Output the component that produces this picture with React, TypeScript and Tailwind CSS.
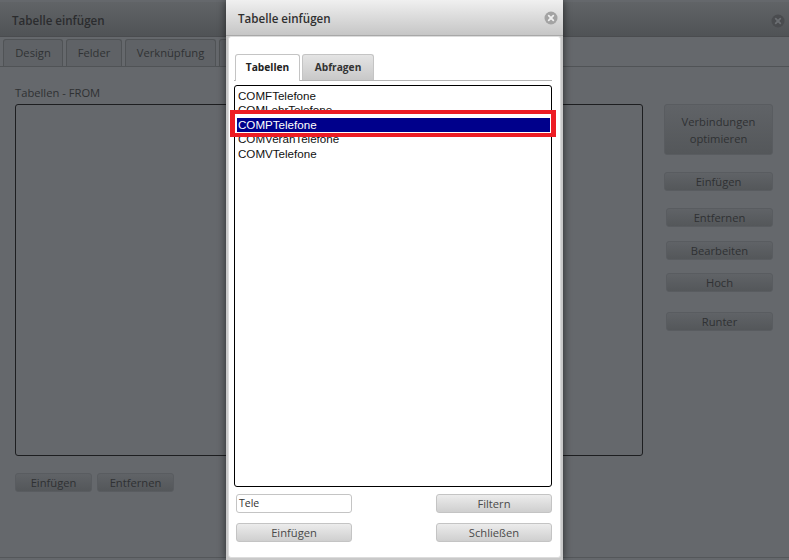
const segoe = "font-['Open_Sans','Noto_Sans',sans-serif]";

function DimButton({ label, className }: { label: string; className: string }) {
  return (
    <div
      className={`flex items-center justify-center rounded-[3px] border border-[#595c60] bg-gradient-to-b from-[#606367] to-[#54575a] pt-[1px] text-[11.2px] text-[#2f3133] ${className}`}
    >
      {label}
    </div>
  );
}

function LightButton({ label }: { label: string }) {
  return (
    <div className="flex h-[19px] w-[116px] items-center justify-center rounded-[3px] border border-[#c4c4c4] bg-gradient-to-b from-[#ececec] to-[#cfcfcf] pt-[1px] text-[11.2px] text-[#4a4a4a]">
      {label}
    </div>
  );
}

function CloseIcon({ fill, stroke }: { fill: string; stroke: string }) {
  return (
    <svg width="14" height="14" viewBox="0 0 14 14">
      <circle cx="7" cy="7" r="6.5" fill={fill} />
      <path d="M4.7 4.7l4.6 4.6M9.3 4.7l-4.6 4.6" stroke={stroke} strokeWidth="1.8" strokeLinecap="round" />
    </svg>
  );
}

function BackgroundWindow() {
  const tabs = [
    { name: "Design", width: "w-[60px]" },
    { name: "Felder", width: "w-[56px]" },
    { name: "Verknüpfung", width: "w-[91px]" },
    { name: "", width: "w-[40px]" },
  ];
  return (
    <div className="flex h-full flex-col bg-[#65686c] pb-[2px] pt-[2px]">
      <div className="flex h-[35px] shrink-0 items-center justify-between border-b border-[#4a4c4f] bg-gradient-to-b from-[#616467] to-[#505356] pl-[12px] pr-[4px] pt-[3px]">
        <span className="text-[11.6px] font-semibold text-[#2b2c2e]">Tabelle einfügen</span>
        <CloseIcon fill="#4a4c4f" stroke="#6b6e72" />
      </div>
      <div className="flex h-[30px] shrink-0 gap-[3px] border-b border-[#505356] pl-[3px] pt-[2px]">
        {tabs.map((t) => (
          <div
            key={t.name || "hidden"}
            className={`flex items-center justify-center rounded-t-[3px] border border-b-0 border-[#505356] bg-[#5f6266] pt-[1px] text-[11.2px] text-[#303234] ${t.width}`}
          >
            {t.name}
          </div>
        ))}
      </div>
      <div className="flex flex-1 border-b border-[#54575a] pl-[15px] pt-[18px]">
        <div className="flex w-[628px] flex-col">
          <div className="h-[19px] text-[11.2px] leading-[16px] text-[#2f3133]">Tabellen - FROM</div>
          <div className="h-[352px] rounded-[3px] border border-[#1d1e20]" />
          <div className="mt-[17px] flex gap-[5px]">
            <DimButton label="Einfügen" className="h-[19px] w-[77px]" />
            <DimButton label="Entfernen" className="h-[19px] w-[77px]" />
          </div>
        </div>
        <div className="ml-[21px] flex w-[109px] flex-col items-end pt-[19px]">
          <div className="flex h-[51px] w-[109px] flex-col items-center justify-center rounded-[3px] border border-[#595c60] bg-gradient-to-b from-[#606367] to-[#54575a] text-[11.2px] leading-[17px] text-[#2f3133]">
            <span>Verbindungen</span>
            <span>optimieren</span>
          </div>
          <DimButton label="Einfügen" className="mt-[17px] h-[19px] w-[109px]" />
          <DimButton label="Entfernen" className="mt-[17px] h-[19px] w-[107px]" />
          <DimButton label="Bearbeiten" className="mt-[14px] h-[19px] w-[107px]" />
          <DimButton label="Hoch" className="mt-[13px] h-[19px] w-[107px]" />
          <DimButton label="Runter" className="mt-[20px] h-[19px] w-[107px]" />
        </div>
      </div>
    </div>
  );
}

function TableDialog() {
  const rows = ["COMFTelefone", "COMLehrTelefone", "COMPTelefone", "COMVeranTelefone", "COMVTelefone"];
  return (
    <div className="absolute left-[226px] top-0 flex h-[560px] w-[337px] flex-col rounded-t-[3px] bg-[#c9c9c9] shadow-[0_0_8px_rgba(0,0,0,0.6)]">
      <div className="flex h-[36px] shrink-0 items-center justify-between border-b border-[#a8a8a8] bg-gradient-to-b from-[#f0f0f0] to-[#c6c6c6] pl-[12px] pr-[5px]">
        <span className="pt-[2px] text-[11.6px] font-semibold text-[#2f2f2f]">Tabelle einfügen</span>
        <CloseIcon fill="#a3a3a3" stroke="#eeeeee" />
      </div>
      <div className="mx-[2px] mb-[2px] flex flex-1 flex-col rounded-[3px] border border-[#dcdcdc] bg-white pl-[5px] pr-[8px] pt-[17px]">
        <div className="flex h-[27px] shrink-0 gap-[2px] border-b border-[#b5b5b5] pl-[1px]">
          <div className="flex h-[27px] w-[65px] items-center justify-center rounded-t-[3px] border border-b-0 border-[#c4c4c4] bg-white text-[10.2px] font-bold text-[#222222]">
            Tabellen
          </div>
          <div className="flex h-[26px] w-[72px] items-center justify-center rounded-t-[3px] border border-b-0 border-[#c4c4c4] bg-gradient-to-b from-[#e4e4e4] to-[#c8c8c8] text-[10.2px] font-bold text-[#333333]">
            Abfragen
          </div>
        </div>
        <div className="relative mt-[4px] h-[402px] w-[318px] shrink-0 rounded-[3px] border border-black bg-white pl-[2px] pr-[1px] pt-[3px] font-['Liberation_Sans',sans-serif] text-[11.6px] leading-[14.4px] text-[#101010]">
          {rows.map((row, i) =>
            i === 2 ? (
              <div key={row} className="bg-[#00008b] pl-[1px] text-white">
                {row}
              </div>
            ) : (
              <div key={row} className="pl-[1px]">
                {row}
              </div>
            )
          )}
          <div className="absolute left-[-5px] top-[24px] h-[27px] w-[326px] border-x-[5px] border-y-[4px] border-[#ed1c24]" />
        </div>
        <div className="mt-[7px] flex items-center justify-between pl-[2px]">
          <div className="flex h-[19px] w-[116px] items-center rounded-[3px] border border-[#c4c4c4] pl-[2px] pt-[1px] text-[10.5px] text-[#333333]">
            Tele
          </div>
          <LightButton label="Filtern" />
        </div>
        <div className="mt-[10px] flex items-center justify-between pl-[2px]">
          <LightButton label="Einfügen" />
          <LightButton label="Schließen" />
        </div>
      </div>
    </div>
  );
}

export default function App() {
  return (
    <div className={`relative h-[560px] w-[789px] overflow-hidden bg-[#3b3d40] ${segoe}`}>
      <BackgroundWindow />
      <TableDialog />
    </div>
  );
}
